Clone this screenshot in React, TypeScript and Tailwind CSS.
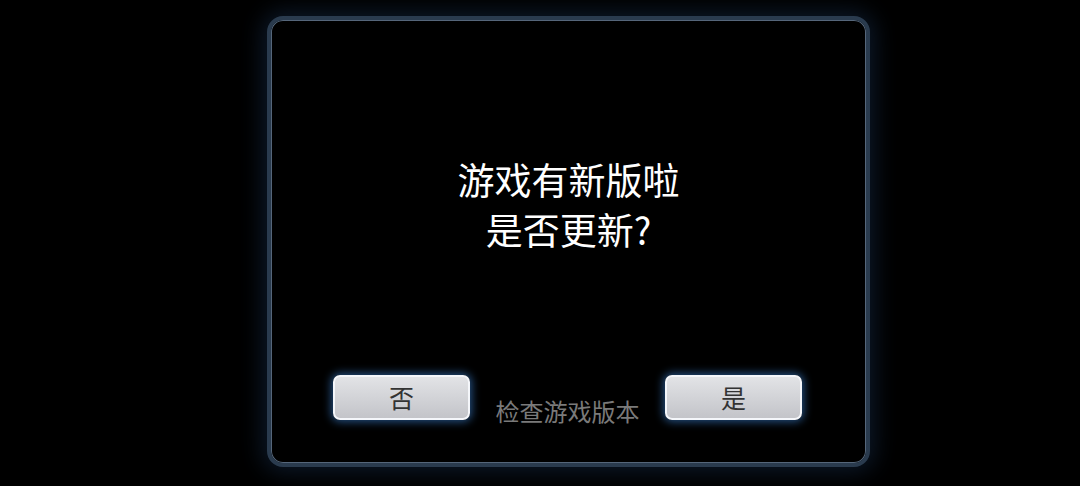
export default function App() {
  return (
    <div
      className="w-[1080px] h-[486px] bg-black flex justify-start pl-[267px]"
      style={{ fontFamily: '"Noto Sans CJK SC", "Noto Sans", sans-serif' }}
    >
      <div className="mt-[16px] w-[603px] h-[451px] rounded-[16px] border-[4px] border-[#2a3b4e] bg-black shadow-[0_0_22px_5px_rgba(30,60,100,0.4),inset_0_0_0_1px_#55667a] flex flex-col items-center">
        <div className="mt-[134px] text-white text-[37px] leading-[50px] text-center">
          <div>游戏有新版啦</div>
          <div>是否更新?</div>
        </div>
        <div className="mt-[121px] w-full flex justify-between items-start pl-[62px] pr-[64px]">
          <button className="w-[137px] h-[45px] rounded-[7px] border-[2px] border-[#f4f6fa] bg-gradient-to-b from-[#e2e3e6] to-[#c3c4c9] text-[#333] text-[25px] leading-none shadow-[0_0_8px_2px_rgba(60,130,210,0.6)] flex items-center justify-center">
            否
          </button>
          <div className="mt-[21px] text-[#7a7a7a] text-[24px] leading-[30px]">检查游戏版本</div>
          <button className="w-[137px] h-[45px] rounded-[7px] border-[2px] border-[#f4f6fa] bg-gradient-to-b from-[#e2e3e6] to-[#c3c4c9] text-[#333] text-[25px] leading-none shadow-[0_0_8px_2px_rgba(60,130,210,0.6)] flex items-center justify-center">
            是
          </button>
        </div>
      </div>
    </div>
  );
}
